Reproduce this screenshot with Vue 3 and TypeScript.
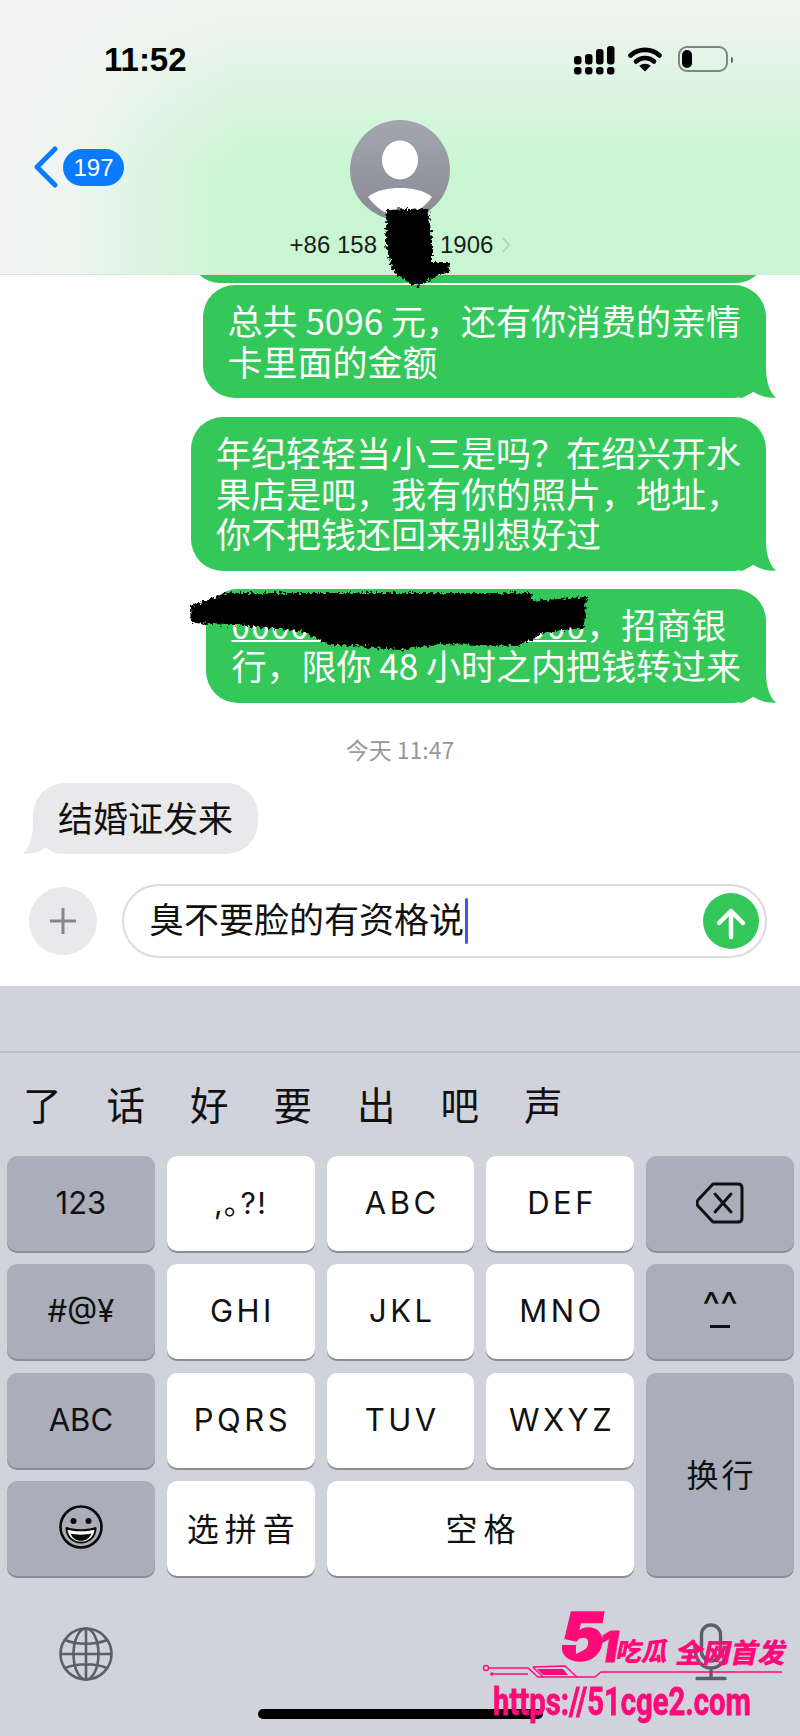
<script setup lang="ts">
interface Key {
  label: string
  kind: 'fn' | 'char'
  cls?: string
}
const candidates: string[] = ['了', '话', '好', '要', '出', '吧', '声']
const keysA: Key[] = [
  { label: '123', kind: 'fn' },
  { label: ',\uFF61?!', kind: 'char', cls: 'punct' },
  { label: 'ABC', kind: 'char', cls: 'spaced' },
  { label: 'DEF', kind: 'char', cls: 'spaced' },
]
const keysB: Key[] = [
  { label: '#@¥', kind: 'fn' },
  { label: 'GHI', kind: 'char', cls: 'spaced' },
  { label: 'JKL', kind: 'char', cls: 'spaced' },
  { label: 'MNO', kind: 'char', cls: 'spaced' },
]
const keysC: Key[] = [
  { label: 'ABC', kind: 'fn' },
  { label: 'PQRS', kind: 'char', cls: 'spaced' },
  { label: 'TUV', kind: 'char', cls: 'spaced' },
  { label: 'WXYZ', kind: 'char', cls: 'spaced' },
]
</script>

<template>
  <div class="phone">
    <header class="head">
      <div class="status">
        <span class="time">11:52</span>
        <div class="status-icons">
          <svg class="signal" width="41" height="29" viewBox="0 0 41 29">
            <rect x="0" y="10" width="7.5" height="8.5" rx="3" />
            <rect x="11" y="8" width="7.5" height="10.5" rx="3" />
            <rect x="22" y="3" width="7.5" height="15.5" rx="3" />
            <rect x="33" y="0" width="7.5" height="18.5" rx="3" />
            <rect x="0" y="21" width="7.5" height="7.5" rx="3" />
            <rect x="11" y="21" width="7.5" height="7.5" rx="3" />
            <rect x="22" y="21" width="7.5" height="7.5" rx="3" />
            <rect x="33" y="21" width="7.5" height="7.5" rx="3" />
          </svg>
          <svg class="wifi" width="34" height="26" viewBox="0 0 34 26">
            <path d="M2.5 9.5 C10.5 2 23.5 2 31.5 9.5" />
            <path d="M8 15.5 C13 10.8 21 10.8 26 15.5" />
            <path class="wifi-dot" d="M17 25.5 L11.2 19.8 C14.5 17 19.5 17 22.8 19.8 Z" />
          </svg>
          <div class="battery"><span class="charge"></span></div>
          <span class="nub"></span>
        </div>
      </div>
      <div class="nav">
        <div class="back">
          <svg width="26" height="44" viewBox="0 0 26 44">
            <path d="M22 4 L4 22 L22 40" />
          </svg>
          <span class="badge">197</span>
        </div>
        <div class="contact">
          <svg class="avatar" width="100" height="100" viewBox="0 0 100 100">
            <defs>
              <linearGradient id="ava" x1="0" y1="0" x2="0" y2="1">
                <stop offset="0" stop-color="#a3a5af" />
                <stop offset="1" stop-color="#888a94" />
              </linearGradient>
            </defs>
            <circle cx="50" cy="50" r="50" fill="url(#ava)" />
            <ellipse cx="50" cy="40" rx="18" ry="19.5" fill="#fff" />
            <path d="M18 77 C26 70 38 68 50 68 C62 68 74 70 82 77 C74 88 63 96 50 96 C37 96 26 88 18 77 Z" fill="#fff" />
          </svg>
          <div class="number">
            <span>+86 158</span><span class="number-gap"></span><span>1906</span>
            <svg class="number-more" width="8" height="18" viewBox="0 0 8 18">
              <path d="M1 2 L7 9 L1 16" />
            </svg>
          </div>
        </div>
        <div></div>
      </div>
    </header>

    <main class="thread">
      <div class="clipped"><div class="clipped-inner"></div></div>

      <div class="bubble sent first">
        <div>总共 5096 元&#xFF0C;还有你消费的亲情</div>
        <div>卡里面的金额</div>
        <svg class="tail" width="36" height="30" viewBox="0 0 36 30"><path d="M0 0 L26 0 C26 14 30 25 36 29.5 C28 30.5 19 28 12 23 C8 27 4 30 0 30 Z" /></svg>
      </div>

      <div class="bubble sent">
        <div>年纪轻轻当小三是吗&#xFF1F;在绍兴开水</div>
        <div>果店是吧&#xFF0C;我有你的照片&#xFF0C;地址&#xFF0C;</div>
        <div>你不把钱还回来别想好过</div>
        <svg class="tail" width="36" height="30" viewBox="0 0 36 30"><path d="M0 0 L26 0 C26 14 30 25 36 29.5 C28 30.5 19 28 12 23 C8 27 4 30 0 30 Z" /></svg>
      </div>

      <div class="bubble sent last">
        <div><span class="account">000000000000000000</span>&#xFF0C;招商银</div>
        <div>行&#xFF0C;限你 48 小时之内把钱转过来</div>
        <svg class="tail" width="36" height="30" viewBox="0 0 36 30"><path d="M0 0 L26 0 C26 14 30 25 36 29.5 C28 30.5 19 28 12 23 C8 27 4 30 0 30 Z" /></svg>
      </div>

      <div class="stamp">今天 11:47</div>

      <div class="bubble received">
        <div>结婚证发来</div>
        <svg class="tail-in" width="36" height="30" viewBox="0 0 36 30"><path d="M36 0 L10 0 C10 14 6 25 0 29.5 C8 30.5 17 28 24 23 C28 27 32 30 36 30 Z" /></svg>
      </div>

      <div class="composer">
        <div class="plus">
          <svg width="28" height="28" viewBox="0 0 28 28">
            <path d="M14 1 V27 M1 14 H27" />
          </svg>
        </div>
        <div class="field">
          <span class="field-text">臭不要脸的有资格说</span>
          <span class="caret"></span>
          <div class="send">
            <svg width="56" height="56" viewBox="0 0 56 56">
              <path d="M28 44 V19 M16 30 L28 18 L40 30" />
            </svg>
          </div>
        </div>
      </div>
    </main>

    <section class="keyboard">
      <div class="kb-top"></div>
      <div class="candidates">
        <span v-for="c in candidates" :key="c" class="cand">{{ c }}</span>
      </div>
      <div class="keys">
        <div v-for="k in keysA" :key="'a' + k.label" class="key" :class="[k.kind, k.cls]">{{ k.label }}</div>
        <div class="key fn">
          <svg width="48" height="42" viewBox="0 0 48 42">
            <path d="M17 2 H42 Q46 2 46 6 V36 Q46 40 42 40 H17 L2 24 Q0 21 2 18 Z" />
            <path d="M19 12 L35 30 M35 12 L19 30" />
          </svg>
        </div>

        <div v-for="k in keysB" :key="'b' + k.label" class="key" :class="[k.kind, k.cls]">{{ k.label }}</div>
        <div class="key fn">
          <span class="kao"><span class="kao-top">^^</span><span class="kao-line"></span></span>
        </div>

        <div v-for="k in keysC" :key="'c' + k.label" class="key" :class="[k.kind, k.cls]">{{ k.label }}</div>
        <div class="key fn tall cjk wide-3">换行</div>

        <div class="key fn">
          <svg class="emoji" width="44" height="44" viewBox="0 0 44 44">
            <circle cx="22" cy="22" r="20.5" />
            <circle class="solid" cx="14.5" cy="16" r="3" />
            <circle class="solid" cx="29.5" cy="16" r="3" />
            <path class="white" d="M7.5 23 C14 26 30 26 36.5 23 C36.5 32 30 37.5 22 37.5 C14 37.5 7.5 32 7.5 23 Z" />
            <path class="solid" d="M11.5 28.5 C17 30 27 30 32.5 28.5 C31 33 27 35.8 22 35.8 C17 35.8 13 33 11.5 28.5 Z" />
          </svg>
        </div>
        <div class="key char cjk wide-6">选拼音</div>
        <div class="key char cjk space wide-6">空格</div>
      </div>
      <div class="kb-bottom">
        <svg class="globe" width="54" height="54" viewBox="0 0 54 54">
          <circle cx="27" cy="27" r="25.5" />
          <ellipse cx="27" cy="27" rx="12.5" ry="25.5" />
          <path d="M27 1.5 V52.5 M1.5 27 H52.5 M6 13 C18 18 36 18 48 13 M6 41 C18 36 36 36 48 41" />
        </svg>
        <svg class="mic" width="36" height="58" viewBox="0 0 36 58">
          <rect x="8.5" y="2" width="19" height="36" rx="9.5" />
          <path d="M2 24 C2 36 8 45 18 45 C28 45 34 36 34 24 M18 45 V55 M4 55.5 H32" />
        </svg>
        <span class="home"></span>
      </div>
    </section>

    <svg class="marks" width="800" height="1736" viewBox="0 0 800 1736">
      <defs>
        <filter id="rough" x="-10%" y="-30%" width="120%" height="160%">
          <feTurbulence type="fractalNoise" baseFrequency="0.3" numOctaves="2" seed="4" />
          <feDisplacementMap in="SourceGraphic" scale="8" xChannelSelector="R" yChannelSelector="G" />
        </filter>
      </defs>
      <g filter="url(#rough)">
        <path d="M387 210 L428 208 L432 240 L432 262 L450 262 L449 272 L432 278 L418 287 L404 280 L392 270 L385 240 Z" />
        <path d="M191 606 L226 593 L531 593 L533 601 L586 597 L584 628 L545 632 L520 646 L440 644 L400 650 L330 644 L300 631 L250 626 L192 623 Z" />
      </g>
      <g class="circuit">
        <circle cx="486" cy="1668" r="2.5" />
        <path d="M489 1668 H528 L538 1677 H595 L601 1672 H782" />
        <path d="M494 1674 H528" />
        <path d="M533 1667 L565 1666 L577 1677" />
        <path d="M533 1667 L543 1677" />
        <path class="circuit-fill" d="M537 1669 L563 1669 L568 1675 L543 1675 Z" />
        <circle class="circuit-fill" cx="492" cy="1674" r="1.8" />
        <path class="play" d="M576 1646 L584 1650 L576 1654 Z" />
      </g>
    </svg>

    <div class="wm">
      <span class="wm-5">5</span>
      <span class="wm-1">1</span>
      <span class="wm-a">吃瓜</span>
      <span class="wm-b">全网首发</span>
      <span class="wm-url">https://51cge2.com</span>
    </div>
  </div>
</template>

<style>
html, body { margin: 0; background: #fff; }
</style>

<style scoped>
.phone {
  position: relative;
  width: 800px;
  height: 1736px;
  overflow: hidden;
  display: flex;
  flex-direction: column;
  background: #fff;
  font-family: "Noto Sans CJK SC", "Liberation Sans", sans-serif;
  color: #000;
}

/* header */
.head {
  height: 275px;
  box-sizing: border-box;
  border-bottom: 1px solid #dde2de;
  background:
    linear-gradient(to right, #f4f4f4 0, rgba(244,244,244,.85) 70px, rgba(244,244,244,0) 240px),
    linear-gradient(to bottom, #f0f3f0 0, rgba(240,243,240,.7) 60px, rgba(240,243,240,0) 170px),
    #c9f6d2;
  position: relative;
  z-index: 2;
}
.status {
  height: 120px;
  box-sizing: border-box;
  padding: 40px 67px 0 104px;
  display: flex;
  justify-content: space-between;
}
.time {
  font: 700 33px/40px "Liberation Sans", sans-serif;
}
.status-icons {
  display: flex;
  align-items: flex-start;
  padding-top: 6px;
}
.signal rect { fill: #000; }
.wifi { margin-left: 13px; }
.wifi path { fill: none; stroke: #000; stroke-width: 4.6px; stroke-linecap: round; }
.wifi .wifi-dot { fill: #000; stroke: none; }
.battery {
  width: 50px;
  height: 26px;
  margin-left: 16px;
  box-sizing: border-box;
  border: 2px solid #7b887f;
  border-radius: 9px;
  padding: 2px;
}
.charge {
  display: block;
  width: 10px;
  height: 18px;
  background: #000;
  border-radius: 5px;
}
.nub {
  width: 2px;
  height: 6px;
  margin: 11px 0 0 3px;
  background: #5f6a62;
  border-radius: 0 2px 2px 0;
}
.nav {
  display: grid;
  grid-template-columns: 1fr auto 1fr;
}
.back {
  display: flex;
  align-items: center;
  align-self: flex-start;
  margin: 25px 0 0 33px;
}
.back svg path { fill: none; stroke: #0a7bff; stroke-width: 5px; stroke-linecap: round; stroke-linejoin: round; }
.badge {
  width: 61px;
  height: 37px;
  margin-left: 4px;
  border-radius: 19px;
  background: #0a7bff;
  color: #fff;
  font: 400 24px/37px "Liberation Sans", sans-serif;
  text-align: center;
}
.contact {
  display: flex;
  flex-direction: column;
  align-items: center;
}
.number {
  margin-top: 12px;
  display: flex;
  align-items: center;
  font: 400 24px/26px "Liberation Sans", sans-serif;
  color: #1c1c1e;
}
.number-gap { width: 63px; }
.number-more { margin-left: 9px; }
.number-more path { fill: none; stroke: #b9c4bb; stroke-width: 1.6px; }

/* thread */
.thread {
  height: 711px;
  display: flex;
  flex-direction: column;
  align-items: flex-end;
  overflow: hidden;
  font-size: 35px;
  line-height: 40.5px;
}
.clipped {
  width: 576px;
  height: 8px;
  margin-right: 34px;
  overflow: hidden;
  position: relative;
}
.clipped-inner {
  height: 60px;
  margin-top: -52px;
  background: #34c759;
  border-radius: 30px;
}
.bubble {
  position: relative;
  box-sizing: border-box;
  padding: 15px 25px 17px;
  border-radius: 32px;
  white-space: nowrap;
}
.sent {
  margin: 19px 34px 0 0;
  background: #34c759;
  color: #fff;
}
.sent.first { margin-top: 2px; }
.sent.last { margin-top: 18px; }
.tail { position: absolute; right: -10px; bottom: 0; fill: #34c759; }
.tail-in { position: absolute; left: -10px; bottom: 0; fill: #e9e9eb; }
.account {
  font-size: 33px;
  letter-spacing: 1.4px;
  text-decoration: underline;
  text-decoration-thickness: 2px;
}
.stamp {
  align-self: center;
  margin-top: 27px;
  font-size: 23px;
  line-height: 38px;
  color: #97979c;
}
.received {
  align-self: flex-start;
  margin: 15.5px 0 0 33px;
  padding: 14px 25px 16px;
  background: #e9e9eb;
  color: #111;
}
.composer {
  align-self: stretch;
  display: flex;
  align-items: center;
  gap: 25px;
  margin-top: 30px;
  padding: 0 33px 0 29px;
}
.plus {
  width: 68px;
  height: 68px;
  flex: none;
  border-radius: 50%;
  background: #e9e9eb;
  display: flex;
  align-items: center;
  justify-content: center;
}
.plus path { stroke: #85858a; stroke-width: 3px; fill: none; }
.field {
  flex: 1;
  height: 74px;
  box-sizing: border-box;
  border: 2px solid #dcdcde;
  border-radius: 37px;
  display: flex;
  align-items: center;
  padding: 0 6px 0 25px;
  color: #111;
}
.field-text { padding-bottom: 4px; }
.caret {
  width: 3px;
  height: 46px;
  margin-left: 1px;
  background: #3a5ad8;
  border-radius: 2px;
}
.send {
  width: 56px;
  height: 56px;
  margin-left: auto;
  border-radius: 50%;
  background: #33c659;
}
.send svg { display: block; }
.send path { fill: none; stroke: #fff; stroke-width: 4.5px; stroke-linecap: round; stroke-linejoin: round; }

/* keyboard */
.keyboard {
  flex: 1;
  position: relative;
  background: #d0d3dc;
  display: flex;
  flex-direction: column;
}
.kb-top {
  height: 65px;
  flex: none;
  border-bottom: 2px solid #babdc5;
}
.candidates {
  height: 103px;
  flex: none;
  box-sizing: border-box;
  padding: 26px 0 0 23px;
  display: flex;
  gap: 45px;
  font-size: 38.5px;
  line-height: 48px;
  color: #111;
}
.keys {
  flex: none;
  display: grid;
  grid-template-columns: repeat(5, 1fr);
  grid-template-rows: repeat(4, 95px);
  gap: 13.3px 12px;
  padding: 0 6px 0 7px;
}
.key {
  display: flex;
  align-items: center;
  justify-content: center;
  box-sizing: border-box;
  padding-bottom: 2px;
  border-radius: 10px;
  font: 400 31px/1 "Inter", "Noto Sans CJK SC", sans-serif;
  color: #111;
}
.fn {
  background: #a9aeba;
  box-shadow: 0 2px 0 #8b8e96;
}
.char {
  background: #fff;
  box-shadow: 0 2px 0 #8b8e96;
}
.spaced { letter-spacing: 3.5px; padding-left: 3.5px; }
.punct { font-size: 30px; letter-spacing: 1.5px; }
.cjk { font-family: "Noto Sans CJK SC", sans-serif; font-size: 32px; }
.wide-3 { letter-spacing: 3px; padding-left: 3px; }
.wide-6 { letter-spacing: 6px; padding-left: 6px; }
.tall { grid-column: 5; grid-row: 3 / span 2; }
.space { grid-column: 3 / span 2; }
.kao {
  display: flex;
  flex-direction: column;
  align-items: center;
}
.kao-top {
  font-size: 38px;
  line-height: 24px;
  height: 24px;
  letter-spacing: 0;
}
.kao-line {
  width: 20px;
  height: 3px;
  margin-top: 8px;
  background: #111;
}
.key svg path { fill: none; stroke: #111; stroke-width: 3px; stroke-linejoin: round; stroke-linecap: round; }
.emoji circle { fill: none; stroke: #0b0b0c; stroke-width: 2.6px; }
.emoji .solid, .key .emoji path.solid { fill: #0b0b0c; stroke: none; }
.key .emoji path.white { fill: #fff; stroke: #0b0b0c; stroke-width: 2px; }
.kb-bottom {
  flex: 1;
  position: relative;
  display: flex;
  justify-content: space-between;
  align-items: flex-start;
  padding: 47px 71px 0 59px;
}
.globe { margin-top: 4px; }
.globe circle, .globe ellipse, .globe path { fill: none; stroke: #5c5f67; stroke-width: 2.6px; }
.mic rect, .mic path { fill: none; stroke: #5c5f67; stroke-width: 3.4px; stroke-linecap: round; }
.home {
  position: absolute;
  left: 258px;
  bottom: 17px;
  width: 285px;
  height: 10px;
  border-radius: 5px;
  background: #000;
}

/* overlays */
.marks {
  position: absolute;
  left: 0;
  top: 0;
  z-index: 3;
  pointer-events: none;
}
.circuit path { fill: none; stroke: #ff0a78; stroke-width: 1.4px; }
.circuit circle { fill: none; stroke: #ff0a78; stroke-width: 1.4px; }
.circuit .circuit-fill { fill: #ff0a78; stroke: none; }
.wm { position: absolute; left: 0; top: 0; z-index: 2; color: #ff0a78; font-weight: 700; pointer-events: none; }
.wm span { position: absolute; white-space: nowrap; }
.wm-5 { left: 560px; top: 1601px; font: italic 900 66px/70px "Inter", sans-serif; -webkit-text-stroke: 1.5px #ff0a78; }
.wm-1 { left: 599px; top: 1622px; font: italic 900 42px/50px "Inter", sans-serif; -webkit-text-stroke: 1px #ff0a78; }
.wm-a { left: 617px; top: 1633px; font-size: 26px; line-height: 34px; transform: skewX(-12deg); font-weight: 900; }
.wm-b { left: 677px; top: 1633px; font-size: 27.5px; line-height: 36px; transform: skewX(-12deg); font-weight: 900; }
.wm-url {
  left: 493px;
  top: 1680px;
  font: 700 38px/44px "Roboto", sans-serif;
  transform-origin: left center;
  transform: scaleX(0.77);
  -webkit-text-stroke: 0.8px #ff0a78;
}
.marks .play { fill: #d0d3dc; stroke: none; }
</style>
